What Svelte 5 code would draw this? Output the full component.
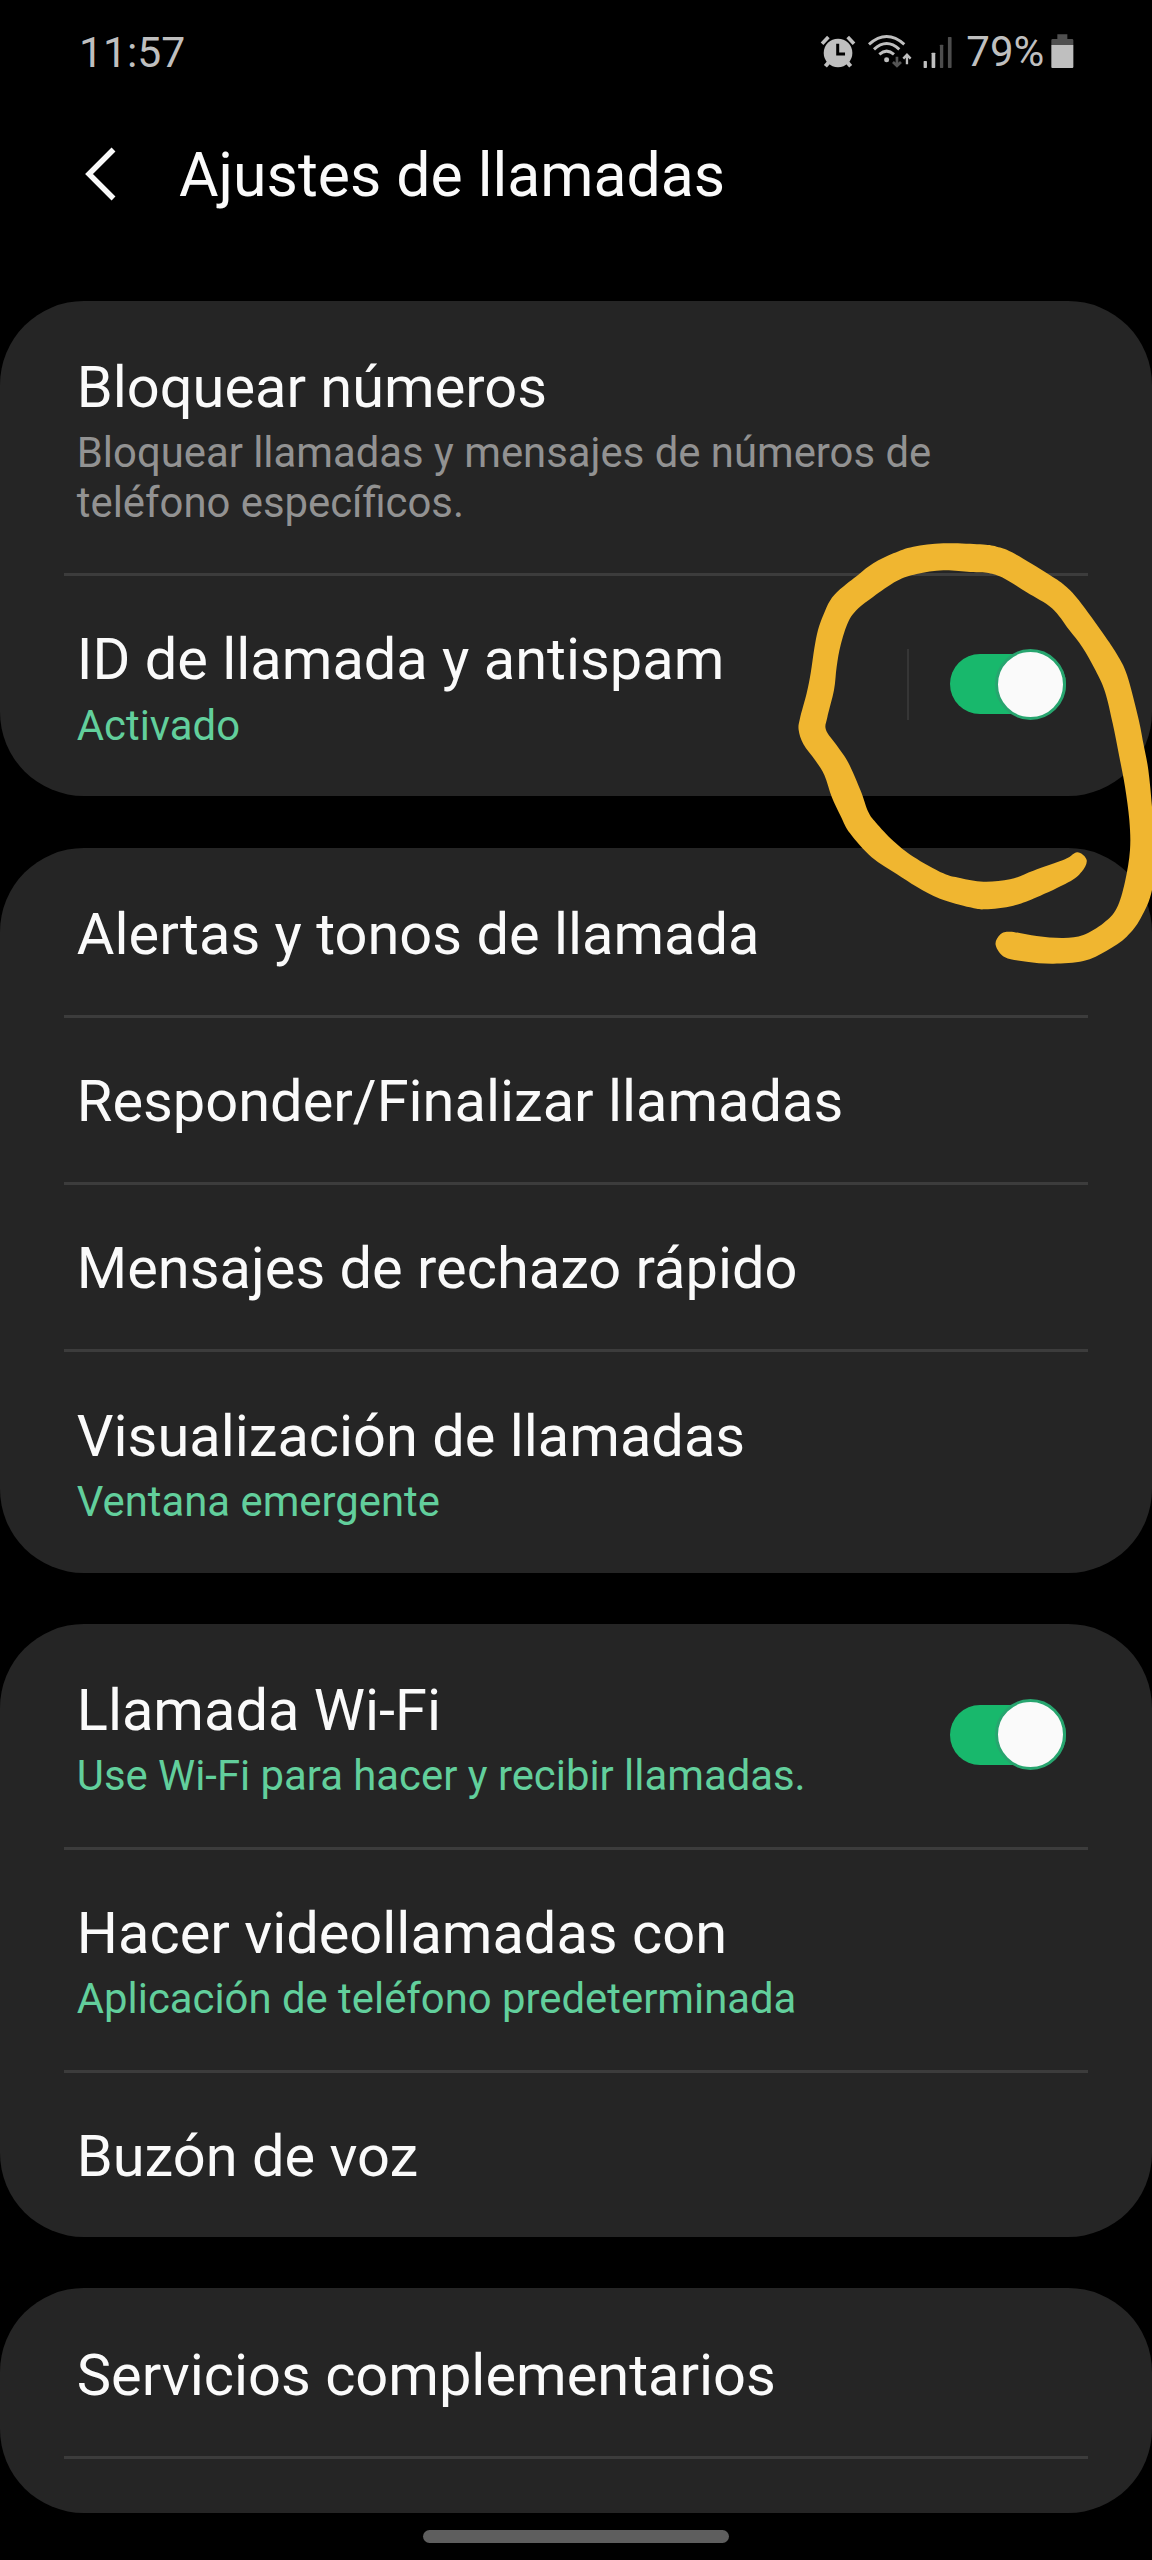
<script>
  const groups = [
    [
      {
        title: 'Bloquear números',
        lines: ['Bloquear llamadas y mensajes de números de', 'teléfono específicos.'],
        muted: true
      },
      { title: 'ID de llamada y antispam', lines: ['Activado'], toggle: true, split: true }
    ],
    [
      { title: 'Alertas y tonos de llamada' },
      { title: 'Responder/Finalizar llamadas' },
      { title: 'Mensajes de rechazo rápido' },
      { title: 'Visualización de llamadas', lines: ['Ventana emergente'] }
    ],
    [
      { title: 'Llamada Wi-Fi', lines: ['Use Wi-Fi para hacer y recibir llamadas.'], toggle: true },
      { title: 'Hacer videollamadas con', lines: ['Aplicación de teléfono predeterminada'] },
      { title: 'Buzón de voz' }
    ],
    [{ title: 'Servicios complementarios' }, { title: '' }]
  ];

  // Outline of the hand-drawn marker loop around the first switch.
  const marker = [
    [950, 1020], [922, 997], [885, 1018], [790, 1052], [720, 1078], [640, 1085], [570, 1074],
    [520, 1060], [430, 1010], [370, 963], [318, 908], [295, 876], [272, 812], [235, 728],
    [200, 676], [168, 630], [172, 592], [192, 510], [200, 440], [212, 375], [235, 305],
    [265, 265], [310, 230], [380, 183], [440, 162], [520, 151], [600, 156], [650, 158],
    [696, 172], [770, 217], [846, 265], [896, 328], [938, 383], [976, 450], [1005, 515],
    [1028, 610], [1048, 710], [1065, 800], [1078, 900], [1080, 990], [1065, 1085],
    [1040, 1165], [1000, 1210], [940, 1245], [880, 1254], [800, 1248], [720, 1235],
    [690, 1244], [677, 1275], [705, 1312], [770, 1325], [850, 1331], [940, 1323],
    [1010, 1292], [1070, 1250], [1112, 1195], [1146, 1110], [1155, 980], [1146, 860],
    [1135, 750], [1120, 670], [1104, 590], [1071, 465], [1042, 405], [1006, 350],
    [926, 240], [885, 197], [831, 160], [726, 97], [680, 80], [630, 73], [520, 70],
    [430, 80], [370, 100], [310, 130], [265, 164], [210, 208], [180, 242], [160, 285],
    [144, 330], [133, 385], [122, 460], [110, 520], [90, 595], [86, 630], [100, 672],
    [135, 720], [163, 765], [185, 830], [213, 890], [240, 940], [305, 1012], [380, 1062],
    [440, 1100], [510, 1136], [600, 1162], [645, 1168], [730, 1157], [800, 1132],
    [895, 1087], [935, 1055]
  ];

  function smooth(p) {
    const n = p.length;
    let d = `M${p[0]}`;
    for (let i = 0; i < n; i++) {
      const a = p[(i + n - 1) % n], b = p[i], c = p[(i + 1) % n], e = p[(i + 2) % n];
      d += `C${b[0] + (c[0] - a[0]) / 6} ${b[1] + (c[1] - a[1]) / 6} ${c[0] - (e[0] - b[0]) / 6} ${c[1] - (e[1] - b[1]) / 6} ${c[0]} ${c[1]}`;
    }
    return d + 'Z';
  }
</script>

<div class="screen">
  <div class="status">
    <span class="time">11:57</span>
    <div class="indicators">
      <svg class="signals" viewBox="120 66 400 106" fill="#bfbfbf">
        <circle cx="174" cy="123" r="43" />
        <g stroke="#bfbfbf" stroke-width="11" fill="none">
          <path d="M126 95L145 75M222 95L203 75" />
          <path d="M147 150L136 163M201 150L212 163" stroke-width="12" />
        </g>
        <path d="M173 95V126H195" stroke="#000" stroke-width="9" fill="none" />
        <g stroke="#bfbfbf" stroke-width="9" fill="none">
          <path d="M267 97Q320 50 373 97" />
          <path d="M282 112Q320 77 358 112" />
          <path d="M298 127Q320 108 342 127" />
          <path d="M381 157V130M370 140L381 128L392 140" stroke-width="7" />
          <path d="M351 134V160M339 150L351 162L363 150" stroke="#555" stroke-width="8" />
        </g>
        <circle cx="320" cy="143" r="7.5" />
        <rect x="431" y="147" width="10" height="21" rx="2" />
        <rect x="455" y="122" width="11" height="46" rx="2" />
        <rect x="480" y="98" width="10" height="70" rx="2" fill="#4d4d4d" />
        <rect x="504" y="75" width="11" height="93" rx="2" fill="#4d4d4d" />
      </svg>
      <span class="percent">79%</span>
      <svg class="battery" viewBox="0 0 68 104">
        <path d="M19 1h30v14h14q4 0 4 4v14H1V19q0-4 4-4h14z" fill="#4f4f4f" />
        <path d="M1 33h66v65q0 4-4 4H5q-4 0-4-4z" fill="#bfbfbf" />
      </svg>
    </div>
  </div>

  <header>
    <svg class="back" viewBox="0 0 32 54"><path d="M29.5 2.5L5 27L29.5 51.5" /></svg>
    <h1>Ajustes de llamadas</h1>
  </header>

  <main>
    {#each groups as rows}
      <section>
        {#each rows as row, i}
          <div class="row" class:divided={i > 0} class:blank={!row.title}>
            {#if row.title}
              <div class="text">
                <h2>{row.title}</h2>
                {#if row.lines}
                  <p class:muted={row.muted}>
                    {#each row.lines as line}<span>{line}</span>{/each}
                  </p>
                {/if}
              </div>
            {/if}
            {#if row.toggle}
              <div class="control" class:split={row.split}>
                <div class="track"><div class="knob"></div></div>
              </div>
            {/if}
          </div>
        {/each}
      </section>
    {/each}
  </main>

  <div class="home"></div>

  <svg class="marker" viewBox="0 0 1146 1380"><path d={smooth(marker)} /></svg>
</div>

<style>
  :global(body) {
    background: #000;
  }
  .screen {
    position: relative;
    box-sizing: border-box;
    width: 1152px;
    height: 2560px;
    overflow: hidden;
    background: #000;
    color: #fafafa;
    font-family: Roboto, 'Noto Sans', sans-serif;
    display: flex;
    flex-direction: column;
  }
  .status {
    display: flex;
    justify-content: space-between;
    align-items: center;
    height: 104px;
    padding: 0 78px 0 79px;
    box-sizing: border-box;
    color: #bfbfbf;
    font-size: 42.7px;
    line-height: 50px;
  }
  .time {
    margin-top: -1px;
  }
  .indicators {
    display: flex;
    align-items: center;
  }
  .signals {
    width: 133.3px;
    height: 35.3px;
    margin-right: 13px;
  }
  .percent {
    font-size: 42px;
  }
  .battery {
    width: 22.7px;
    height: 34.7px;
    margin: -2px 0 0 7px;
  }
  header {
    display: flex;
    align-items: center;
    height: 197px;
    padding: 0 0 53px 84px;
    box-sizing: border-box;
  }
  .back {
    width: 32px;
    height: 54px;
    margin-top: -5px;
    fill: none;
    stroke: #fafafa;
    stroke-width: 5.5;
  }
  h1 {
    margin: 0 0 0 63px;
    font-size: 60.7px;
    font-weight: 400;
    line-height: 72px;
  }
  main {
    display: flex;
    flex-direction: column;
    gap: 51.2px;
  }
  section {
    background: #252525;
    border-radius: 84px;
    overflow: hidden;
  }
  .row {
    display: flex;
    justify-content: space-between;
    align-items: center;
    padding: 52.1px 86.5px 47px 76.8px;
  }
  .divided {
    background: linear-gradient(#3c3c3c, #3c3c3c) 64px 0 / 1024px 3px no-repeat;
  }
  .blank {
    padding: 0;
    height: 57px;
  }
  h2 {
    margin: 0;
    font-size: 57.75px;
    font-weight: 400;
    line-height: 68.2px;
    white-space: nowrap;
  }
  p {
    margin: 7.2px 0 -0.6px;
    font-size: 41.83px;
    line-height: 49.2px;
    color: #62cf9c;
    white-space: nowrap;
  }
  p span {
    display: block;
  }
  .muted {
    color: #929292;
  }
  .control {
    display: flex;
    align-items: center;
    height: 71px;
    margin: -8.5px 0 -2.5px;
  }
  .split {
    border-left: 2px solid #363636;
    padding-left: 41.5px;
  }
  .track {
    display: flex;
    align-items: center;
    justify-content: flex-end;
    width: 115.5px;
    height: 60px;
    border-radius: 30px;
    background: #18b86c;
  }
  .knob {
    flex: none;
    box-sizing: border-box;
    width: 71px;
    height: 71px;
    border: 3px solid #27a56f;
    border-radius: 50%;
    background: #fafafa;
  }
  .home {
    width: 306px;
    height: 13px;
    margin: 17.5px auto 0;
    border-radius: 6.5px;
    background: #5e5e5e;
  }
  .marker {
    position: absolute;
    left: 770px;
    top: 520px;
    width: 382px;
    height: 460px;
    fill: #f0b630;
  }
</style>
